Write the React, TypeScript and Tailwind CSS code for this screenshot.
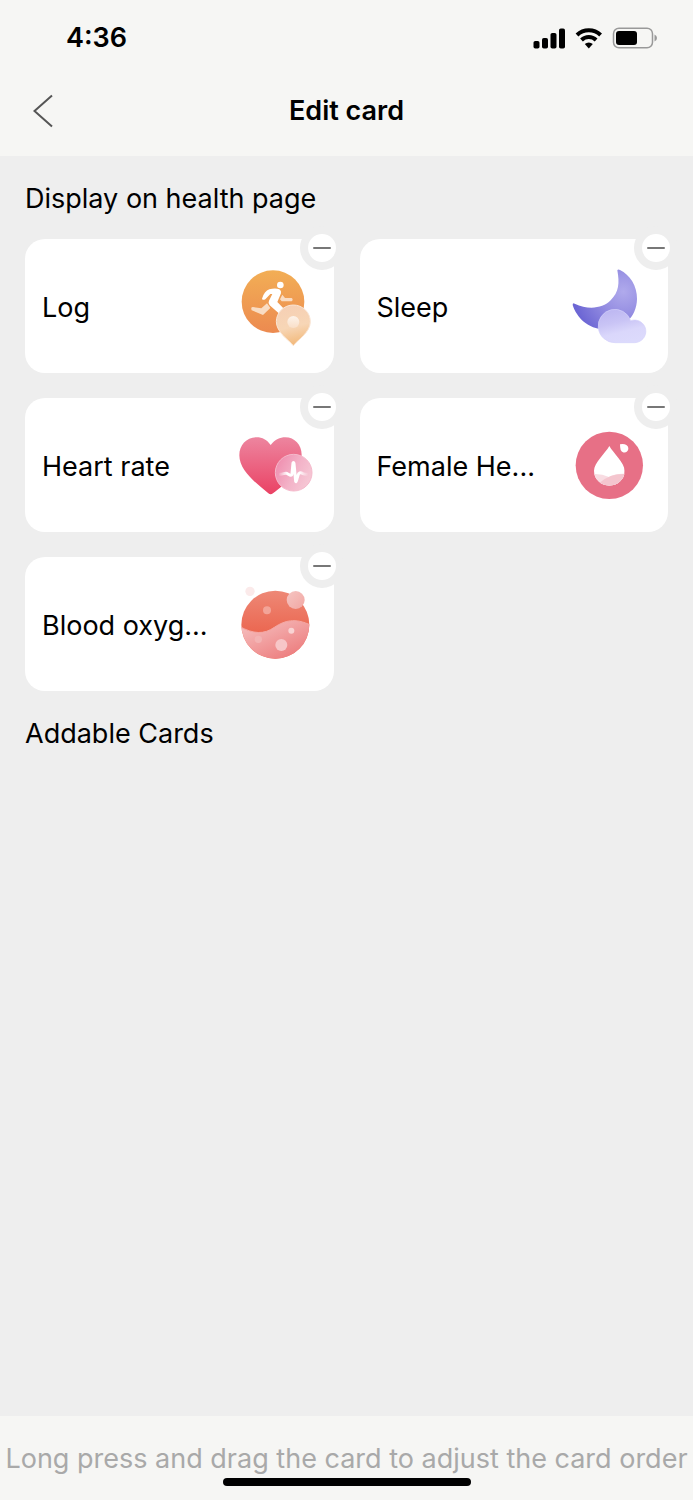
import type { ReactNode } from "react";

function LogIcon() {
  return (
    <svg viewBox="33 123 240 240" className="size-20 shrink-0" aria-hidden="true">
      <defs>
        <linearGradient id="log-disc" x1="0" y1="0" x2="0" y2="1">
          <stop offset="0" stopColor="#f2ae55" />
          <stop offset="1" stopColor="#ec8a50" />
        </linearGradient>
        <linearGradient id="log-pin" x1="0.3" y1="0" x2="0.5" y2="1">
          <stop offset="0" stopColor="#f6cfb4" />
          <stop offset="0.55" stopColor="#f7d6b6" />
          <stop offset="1" stopColor="#f2b878" />
        </linearGradient>
        <linearGradient id="log-dot" x1="0" y1="0" x2="0" y2="1">
          <stop offset="0" stopColor="#fdf3ea" />
          <stop offset="1" stopColor="#f9dfc8" />
        </linearGradient>
      </defs>
      <circle cx="144" cy="230" r="94" fill="url(#log-disc)" />
      <path d="M126 235l10 14-22 21-34-14q-4-10 4-10l25 4z" fill="#f9dcc3" />
      <path d="M172 209l8 10h20q6 5 0 10h-30l-5-6z" fill="#f9dcc3" />
      <circle cx="166" cy="180" r="10" fill="#fff" />
      <path
        d="M133 193C145 190 155 190 163 193Q170 197 168 205L157 231 178 253 163 266 134 241Q128 235 132 227L142 207H136L121 223Q113 227 111 221 118 198 133 193z"
        fill="#fff"
      />
      <path
        d="M205 362C192 345 154 322 154 290a51 50 0 0 1 102 0C256 322 218 345 205 362z"
        fill="url(#log-pin)"
        stroke="#fae5d4"
        strokeWidth="3"
      />
      <circle cx="205" cy="291" r="18" fill="url(#log-dot)" />
    </svg>
  );
}

function SleepIcon() {
  return (
    <svg viewBox="45 123 240 240" className="size-20 shrink-0" aria-hidden="true">
      <defs>
        <radialGradient id="sleep-moon" gradientUnits="userSpaceOnUse" cx="205" cy="200" r="150">
          <stop offset="0" stopColor="#b0aaec" />
          <stop offset="0.45" stopColor="#968fe2" />
          <stop offset="1" stopColor="#6c66d4" />
        </radialGradient>
        <linearGradient id="sleep-cloud" x1="0.2" y1="0" x2="0.55" y2="1">
          <stop offset="0" stopColor="#bcb6f1" />
          <stop offset="0.4" stopColor="#c9c4f5" />
          <stop offset="0.7" stopColor="#dad7fb" />
          <stop offset="1" stopColor="#dcdafc" />
        </linearGradient>
      </defs>
      <path
        d="M187 136q2-4 8-1C224 149 247 183 246 222c-1 55-42 91-97 91C99 313 64 276 53 240q0-7 6-4c42 20 84 14 108-10 25-25 27-51 20-90z"
        fill="url(#sleep-moon)"
      />
      <path
        d="M180 353A50 50 0 1 1 227 287A34 34 0 1 1 239 353z"
        fill="url(#sleep-cloud)"
        stroke="#d5d1fa"
        strokeWidth="2"
      />
    </svg>
  );
}

function HeartIcon() {
  return (
    <svg viewBox="33 120 240 240" className="size-20 shrink-0" aria-hidden="true">
      <defs>
        <linearGradient id="heart-body" x1="0" y1="0" x2="0" y2="1">
          <stop offset="0" stopColor="#ed859f" />
          <stop offset="1" stopColor="#ea4264" />
        </linearGradient>
        <linearGradient id="heart-badge" x1="0" y1="0.2" x2="1" y2="0.7">
          <stop offset="0" stopColor="#ef8cae" />
          <stop offset="0.55" stopColor="#f3b3c8" />
          <stop offset="1" stopColor="#f6c9d6" />
        </linearGradient>
        <linearGradient id="heart-pulse" gradientUnits="userSpaceOnUse" x1="160" y1="0" x2="250" y2="0">
          <stop offset="0" stopColor="#fff" stopOpacity="0" />
          <stop offset="0.3" stopColor="#fff" />
          <stop offset="0.7" stopColor="#fff" />
          <stop offset="1" stopColor="#fff" stopOpacity="0" />
        </linearGradient>
      </defs>
      <path
        d="M137 180C151 163 164 157 181 157c28 0 49 23 49 52 0 45-47 86-86 116q-7 6-14 0C92 294 43 256 43 211c0-31 22-54 52-54 17 0 31 8 42 23z"
        fill="url(#heart-body)"
      />
      <circle cx="206" cy="263" r="55" fill="url(#heart-badge)" stroke="#f5b9cb" strokeWidth="3" />
      <path
        d="M165 268C174 268 180 263 185 265C192 268 200 276 201 266L204 234Q206 231 207 235L212 289Q213 292 214 288L219 271C221 263 227 262 232 265Q238 268 246 268"
        fill="none"
        stroke="url(#heart-pulse)"
        strokeWidth="9"
        strokeLinecap="round"
        strokeLinejoin="round"
      />
    </svg>
  );
}

function DropIcon() {
  return (
    <svg viewBox="45 120 240 240" className="size-20 shrink-0" aria-hidden="true">
      <defs>
        <clipPath id="drop-shape">
          <path d="M163 183C174 203 209 234 209 257a46 45 0 0 1-92 0C117 234 152 203 163 183z" />
        </clipPath>
      </defs>
      <circle cx="163" cy="241" r="101" fill="#e77086" />
      <g clipPath="url(#drop-shape)">
        <rect x="110" y="180" width="105" height="125" fill="#fff" />
        <path d="M110 268q27-3 52 8 24-13 55-9v40H110z" fill="#f8dce2" />
        <path d="M136 292q30-28 80-25v40h-90z" fill="#f4c5ce" />
      </g>
      <path d="M195 178q12-2 19 2a12 12 0 1 1-17 15q-2-7-2-17z" fill="#fff" />
    </svg>
  );
}

function OxygenIcon() {
  return (
    <svg viewBox="33 117 240 240" className="size-20 shrink-0" aria-hidden="true">
      <defs>
        <linearGradient id="oxygen-top" x1="0" y1="0" x2="0" y2="1">
          <stop offset="0" stopColor="#ee8a78" />
          <stop offset="0.6" stopColor="#eb6852" />
        </linearGradient>
        <linearGradient id="oxygen-wave" x1="0.1" y1="0.1" x2="0.8" y2="1">
          <stop offset="0" stopColor="#f5bcbc" />
          <stop offset="1" stopColor="#ec7778" />
        </linearGradient>
        <linearGradient id="oxygen-bubble" x1="0" y1="0" x2="1" y2="1">
          <stop offset="0" stopColor="#f5c5c2" />
          <stop offset="1" stopColor="#f2a7a3" />
        </linearGradient>
        <clipPath id="oxygen-disc">
          <circle cx="151" cy="239" r="102" />
        </clipPath>
      </defs>
      <circle cx="75" cy="139" r="14" fill="#fbeaea" />
      <g clipPath="url(#oxygen-disc)">
        <rect x="45" y="130" width="215" height="215" fill="url(#oxygen-top)" />
        <path
          d="M45 245c40 22 72 24 103 2 30-20 62-30 110-6v105H45z"
          fill="url(#oxygen-wave)"
          stroke="#f4a8a4"
          strokeWidth="3"
        />
      </g>
      <circle cx="212" cy="165" r="27" fill="url(#oxygen-bubble)" />
      <circle cx="126" cy="196" r="12" fill="#f3a498" />
      <circle cx="199" cy="257" r="9" fill="#f9d3d3" />
      <circle cx="169" cy="300" r="18" fill="#f7c6c8" />
      <circle cx="100" cy="283" r="11" fill="#f3b3b3" />
    </svg>
  );
}

const cards: { label: string; icon: ReactNode }[] = [
  { label: "Log", icon: <LogIcon /> },
  { label: "Sleep", icon: <SleepIcon /> },
  { label: "Heart rate", icon: <HeartIcon /> },
  { label: "Female He...", icon: <DropIcon /> },
  { label: "Blood oxyg...", icon: <OxygenIcon /> },
];

function StatusBar() {
  return (
    <div className="flex h-19 items-center justify-between pr-9 pl-[66px]">
      <span className="text-[27px] leading-9 font-semibold">4:36</span>
      <svg viewBox="0 0 124 22" className="h-[22px] w-[124px]" aria-hidden="true">
        <rect x="0.5" y="14" width="6" height="7.5" rx="1.8" />
        <rect x="9" y="11" width="6" height="10.5" rx="1.8" />
        <rect x="17.5" y="6" width="6" height="15.5" rx="1.8" />
        <rect x="26" y="1.5" width="6" height="20" rx="1.8" />
        <g fill="none" stroke="#000" strokeWidth="4">
          <path d="M44 8a17 17 0 0 1 23.6 0" />
          <path d="M48.5 13a10.5 10.5 0 0 1 14.6 0" />
        </g>
        <path d="M51.8 17a6 6 0 0 1 8 0l-4 4.500z" />
        <rect x="80.5" y="1.2" width="39" height="19.6" rx="5.5" fill="none" stroke="#999" strokeWidth="1.5" />
        <rect x="83" y="4" width="21" height="14" rx="3" />
        <path d="M121.5 7.500q2.500 1 2.500 3.500t-2.500 3.500z" fill="#999" />
      </svg>
    </div>
  );
}

export default function App() {
  return (
    <div className="flex min-h-screen flex-col bg-[#eeeeee] font-[Inter,'Liberation_Sans',sans-serif] text-black">
      <header className="bg-[#f6f6f4]">
        <StatusBar />
        <div className="grid h-20 grid-cols-[80px_1fr_80px] items-start">
          <button type="button" aria-label="Back" className="flex h-[70px] items-center pl-[33px]">
            <svg viewBox="0 0 21 34" className="h-[34px] w-[21px]" aria-hidden="true">
              <path d="M19 1.500L1.500 17l17.500 15.500" fill="none" stroke="#555" strokeWidth="2" />
            </svg>
          </button>
          <h1 className="text-center text-[27px] leading-[70px] font-semibold">Edit card</h1>
        </div>
      </header>

      <main className="flex-1 px-[25px] pt-[25px]">
        <h2 className="text-[27px] leading-9">Display on health page</h2>
        <ul className="mt-[22px] grid grid-cols-2 gap-x-[26px] gap-y-[25px]">
          {cards.map((card) => (
            <li
              key={card.label}
              className="relative flex h-[134px] items-center justify-between rounded-[20px] bg-white pr-[18px] pl-[17px]"
            >
              <span className="pt-1 text-[27px] leading-9 whitespace-nowrap">{card.label}</span>
              {card.icon}
              <button
                type="button"
                aria-label={`Remove ${card.label}`}
                className="absolute -top-[13px] -right-[10px] flex size-11 items-center justify-center rounded-full border-8 border-[#eeeeee] bg-white"
              >
                <span className="h-[2px] w-[18px] rounded-full bg-[#777]" />
              </button>
            </li>
          ))}
        </ul>
        <h2 className="mt-[25px] text-[27px] leading-9">Addable Cards</h2>
      </main>

      <footer className="flex h-21 flex-col items-center bg-[#f6f6f4] pt-[25px]">
        <p className="text-[27px] leading-9 whitespace-nowrap text-[#a9a9a9]">
          Long press and drag the card to adjust the card order
        </p>
        <div className="mt-px h-2 w-[248px] rounded-full bg-black" />
      </footer>
    </div>
  );
}
